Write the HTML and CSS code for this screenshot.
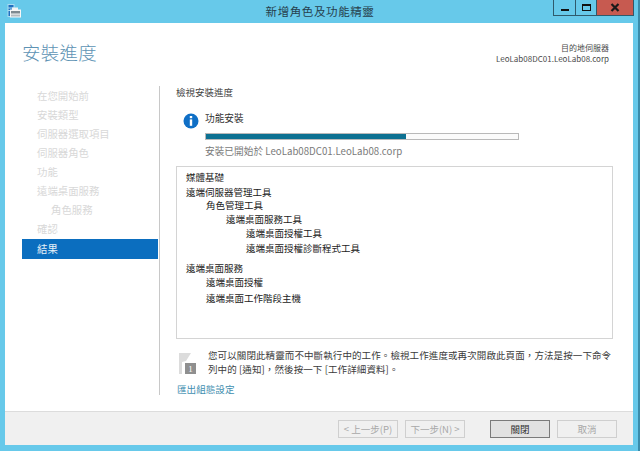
FILE: index.html
```html
<!DOCTYPE html>
<html lang="zh-Hant">
<head>
<meta charset="utf-8">
<title>新增角色及功能精靈</title>
<link rel="stylesheet" href="styles.css">
</head>
<body>
<div class="window">
  <header class="titlebar">
    <svg class="app-icon" width="14" height="14" viewBox="0 0 14 14">
      <rect x="0.5" y="0" width="7" height="13" fill="#a8dcf2"/>
      <rect x="1.5" y="1" width="5" height="2.5" fill="#1f6fc0"/>
      <rect x="1.5" y="4.5" width="5" height="1.5" fill="#1f6fc0"/>
      <rect x="1.5" y="7" width="3" height="5" fill="#1f6fc0"/>
      <rect x="5" y="3.5" width="6" height="3" fill="#f4f4f4"/>
      <rect x="3" y="5.5" width="11" height="8" fill="#f7f7f7"/>
      <rect x="4" y="7" width="9" height="2.5" fill="#7f8a90"/>
      <rect x="4" y="10.5" width="9" height="2" fill="#b4bbbf"/>
    </svg>
    <span class="title-text">新增角色及功能精靈</span>
    <div class="controls">
      <div class="ctl ctl-min"><span class="glyph-min"></span></div>
      <div class="ctl ctl-max"><span class="glyph-max"></span></div>
      <div class="ctl ctl-close">
        <svg width="10" height="9" viewBox="0 0 10 9"><path d="M1.5 1 L8.5 8 M8.5 1 L1.5 8" stroke="#1a1a1a" stroke-width="2.2" fill="none"/></svg>
      </div>
    </div>
  </header>
  <div class="client">
    <div class="page">
      <div class="page-head">
        <h1 class="page-title">安裝進度</h1>
        <div class="server">
          <div>目的地伺服器</div>
          <div>LeoLab08DC01.LeoLab08.corp</div>
        </div>
      </div>
      <div class="columns">
        <nav class="nav">
          <div class="nav-item">在您開始前</div>
          <div class="nav-item">安裝類型</div>
          <div class="nav-item">伺服器選取項目</div>
          <div class="nav-item">伺服器角色</div>
          <div class="nav-item">功能</div>
          <div class="nav-item">遠端桌面服務</div>
          <div class="nav-item nav-sub">角色服務</div>
          <div class="nav-item">確認</div>
          <div class="nav-item nav-active">結果</div>
        </nav>
        <main class="content">
          <div class="section-label">檢視安裝進度</div>
          <div class="status">
            <svg class="info" width="16" height="16" viewBox="0 0 16 16">
              <circle cx="8" cy="8" r="7.5" fill="#0f6fc6"/>
              <rect x="6.8" y="3" width="2.4" height="2.2" fill="#fff"/>
              <rect x="6.8" y="6.4" width="2.4" height="6.4" fill="#fff"/>
            </svg>
            <div class="status-body">
              <div class="status-name">功能安裝</div>
              <div class="progress"><div class="progress-fill"></div></div>
              <div class="status-note">安裝已開始於 LeoLab08DC01.LeoLab08.corp</div>
            </div>
          </div>
          <div class="results">
            <div class="r r0">媒體基礎</div>
            <div class="r r0 up1">遠端伺服器管理工具</div>
            <div class="r r1 down1">角色管理工具</div>
            <div class="r r2">遠端桌面服務工具</div>
            <div class="r r3">遠端桌面授權工具</div>
            <div class="r r3 up1">遠端桌面授權診斷程式工具</div>
            <div class="r r0 gap-l">遠端桌面服務</div>
            <div class="r r1">遠端桌面授權</div>
            <div class="r r1 gap-s">遠端桌面工作階段主機</div>
          </div>
          <div class="notice">
            <svg class="flag" width="18" height="21" viewBox="0 0 18 21">
              <path d="M0 0 H12 L7 8 L3 9 V21 H0 Z" fill="#dcdcdc"/>
              <rect x="6" y="10" width="11" height="11" fill="#8f8f8f"/>
              <text x="11.5" y="19" class="flag-num">1</text>
            </svg>
            <p class="notice-text">您可以關閉此精靈而不中斷執行中的工作。檢視工作進度或再次開啟此頁面，方法是按一下命令列中的 [通知]，然後按一下 [工作詳細資料]。</p>
          </div>
          <a class="export">匯出組態設定</a>
        </main>
      </div>
    </div>
    <footer class="footer">
      <button class="btn" disabled>&lt; 上一步(P)</button>
      <button class="btn btn-next" disabled>下一步(N) &gt;</button>
      <button class="btn btn-primary">關閉</button>
      <button class="btn" disabled>取消</button>
    </footer>
  </div>
</div>
</body>
</html>
```
FILE: styles.css
```css
* { box-sizing: border-box; }
html, body { margin: 0; padding: 0; height: 100%; overflow: hidden; }
body {
  width: 640px;
  height: 451px;
  background: #67c9ea;
  font-family: "Noto Sans CJK TC", "Liberation Sans", sans-serif;
  font-size: 9px;
  color: #333;
}
.window {
  width: 640px;
  height: 451px;
  display: flex;
  flex-direction: column;
  border-right: 2px solid #3a8cab;
}
.titlebar {
  height: 23px;
  flex: none;
  display: flex;
  align-items: flex-start;
  position: relative;
  padding-left: 7px;
}
.app-icon { margin-top: 4px; }
.title-text {
  position: absolute;
  left: 0;
  width: 640px;
  top: 2px;
  text-align: center;
  font-size: 11.5px;
  line-height: 18px;
  letter-spacing: 0.6px;
  color: #26404d;
}
.controls {
  position: absolute;
  top: 0;
  left: 553px;
  display: flex;
  height: 16px;
  border: 1px solid #2f5a6c;
  border-top: 0;
}
.ctl { height: 15px; display: flex; align-items: center; justify-content: center; }
.ctl-min { width: 22px; border-right: 1px solid #2f5a6c; }
.ctl-max { width: 21px; border-right: 1px solid #2f5a6c; }
.ctl-close { width: 36px; background: #c75a50; }
.glyph-min { width: 8px; height: 2px; background: #111; margin-top: 5px; }
.glyph-max { width: 9px; height: 7px; border: 1px solid #111; border-top-width: 2px; }
.client {
  margin: 0 5px 6px 5px;
  flex: 1;
  min-height: 0;
  display: flex;
  flex-direction: column;
  background: #fff;
}
.page { flex: 1; min-height: 0; display: flex; flex-direction: column; }
.page-head {
  height: 62px;
  flex: none;
  display: flex;
  justify-content: space-between;
  padding: 16px 24px 0 17px;
}
.page-title {
  margin: 0;
  font-size: 18.4px;
  font-weight: 300;
  line-height: 26px;
  letter-spacing: 0.4px;
  color: #5d93b4;
}
.server { text-align: right; font-size: 8px; line-height: 11px; padding-top: 3px; color: #4a4a4a; }
.columns { flex: 1; min-height: 0; display: flex; }
.nav {
  width: 155px;
  flex: none;
  height: 309px;
  border-right: 1px solid #c8c8c8;
  padding: 1px 0 0 17px;
  margin-top: 1px;
}
.nav-item {
  height: 19px;
  font-size: 10.4px;
  line-height: 17px;
  padding-left: 15px;
  color: #d8d8d8;
  margin-right: 1px;
}
.nav-sub { padding-left: 29px; }
.nav-active { background: #0b6ebf; color: #e6f0f8; height: 20px; line-height: 20px; }
.content { flex: 1; min-width: 0; padding: 0 20px 0 16px; display: flex; flex-direction: column; }
.section-label { height: 23px; line-height: 14px; font-size: 9.5px; color: #444; }
.status { display: flex; height: 57px; flex: none; }
.info { margin: 5px 6px 0 7px; flex: none; }
.status-body { width: 314px; }
.status-name { font-size: 9.7px; line-height: 16px; height: 23px; color: #333; margin-top: 2px; }
.progress { height: 7px; border: 1px solid #b9b9b9; background: #fbfbfb; }
.progress-fill { width: 200px; height: 5px; background: #0d7192; }
.status-note { font-size: 9.7px; line-height: 16px; margin-top: 3px; color: #7a7a7a; }
.results {
  height: 173px;
  flex: none;
  border: 1px solid #d4d4d4;
  padding: 0 9px;
  margin-bottom: 9px;
  margin-top: 1px;
}
.r { font-size: 9.5px; line-height: 14px; height: 14px; color: #222; }
.r:first-child { margin-top: 2.5px; }
.r1 { padding-left: 20px; }
.r2 { padding-left: 40px; }
.r3 { padding-left: 60px; }
.up1 { margin-top: 1px; }
.down1 { margin-top: -1px; }
.gap-s { margin-top: 2px; }
.gap-l { margin-top: 6px; }
.notice { display: flex; height: 33px; flex: none; }
.flag { margin: 5px 11px 0 3px; flex: none; }
.flag-num { font-family: "Liberation Serif", serif; font-size: 9px; fill: #fff; text-anchor: middle; }
.notice-text {
  margin: 0;
  width: 408px;
  font-size: 9.5px;
  line-height: 14px;
  color: #3a3a3a;
  letter-spacing: 0.1px;
}
.export { font-size: 9.6px; line-height: 14px; color: #3f8fb0; margin-top: 1px; padding-left: 1px; }
.footer {
  height: 34px;
  flex: none;
  background: #f0f0f0;
  border-top: 1px solid #dcdcdc;
  display: flex;
  align-items: flex-start;
  padding: 8px 0 0 333px;
}
.btn {
  width: 60px;
  height: 18px;
  padding: 0;
  margin: 0 7px 0 0;
  background: #f0f0f0;
  border: 1px solid #cfcfcf;
  font-family: "Noto Sans CJK TC", "Liberation Sans", sans-serif;
  font-size: 9.5px;
  line-height: 16px;
  color: #a8a8a8;
}
.btn-next { margin-right: 25px; }
.btn-primary { background: #e1e1e1; border: 1px solid #7a7a7a; color: #333; }
```
